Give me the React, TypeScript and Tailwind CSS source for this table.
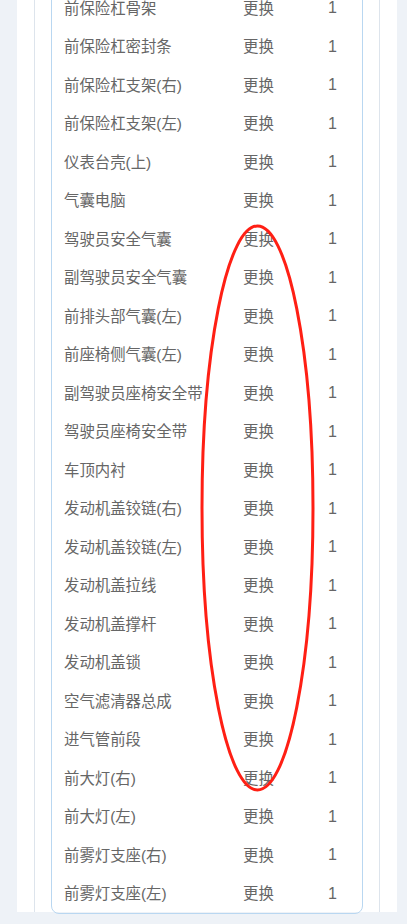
import React from "react";

const items = [
  "前保险杠骨架",
  "前保险杠密封条",
  "前保险杠支架(右)",
  "前保险杠支架(左)",
  "仪表台壳(上)",
  "气囊电脑",
  "驾驶员安全气囊",
  "副驾驶员安全气囊",
  "前排头部气囊(左)",
  "前座椅侧气囊(左)",
  "副驾驶员座椅安全带",
  "驾驶员座椅安全带",
  "车顶内衬",
  "发动机盖铰链(右)",
  "发动机盖铰链(左)",
  "发动机盖拉线",
  "发动机盖撑杆",
  "发动机盖锁",
  "空气滤清器总成",
  "进气管前段",
  "前大灯(右)",
  "前大灯(左)",
  "前雾灯支座(右)",
  "前雾灯支座(左)",
];

export default function App() {
  return (
    <div
      className="relative h-[924px] w-[407px] overflow-hidden bg-[#eef2f7] pl-[17px] pr-[10px]"
      style={{ fontFamily: '"Liberation Sans", "Noto Sans CJK SC", sans-serif' }}
    >
      <div className="h-full bg-white px-[17px]">
        <div className="h-full border-x border-[#dde4ec] px-4">
          <div className="-mt-[12px] rounded-b-lg border border-[#b9d7f1]">
            {items.map((name) => (
              <div key={name} className="flex h-[38.5px] items-center pl-3 text-[15.4px] text-[#666]">
                <span className="w-[179px] whitespace-nowrap">{name}</span>
                <span className="w-[85px]">更换</span>
                <span className="text-[16px]">1</span>
              </div>
            ))}
          </div>
        </div>
      </div>
      <svg className="pointer-events-none absolute left-0 top-0" width="407" height="924">
        <ellipse cx="257.5" cy="508" rx="55.5" ry="282" fill="none" stroke="#ff1f14" strokeWidth="3" />
      </svg>
    </div>
  );
}
